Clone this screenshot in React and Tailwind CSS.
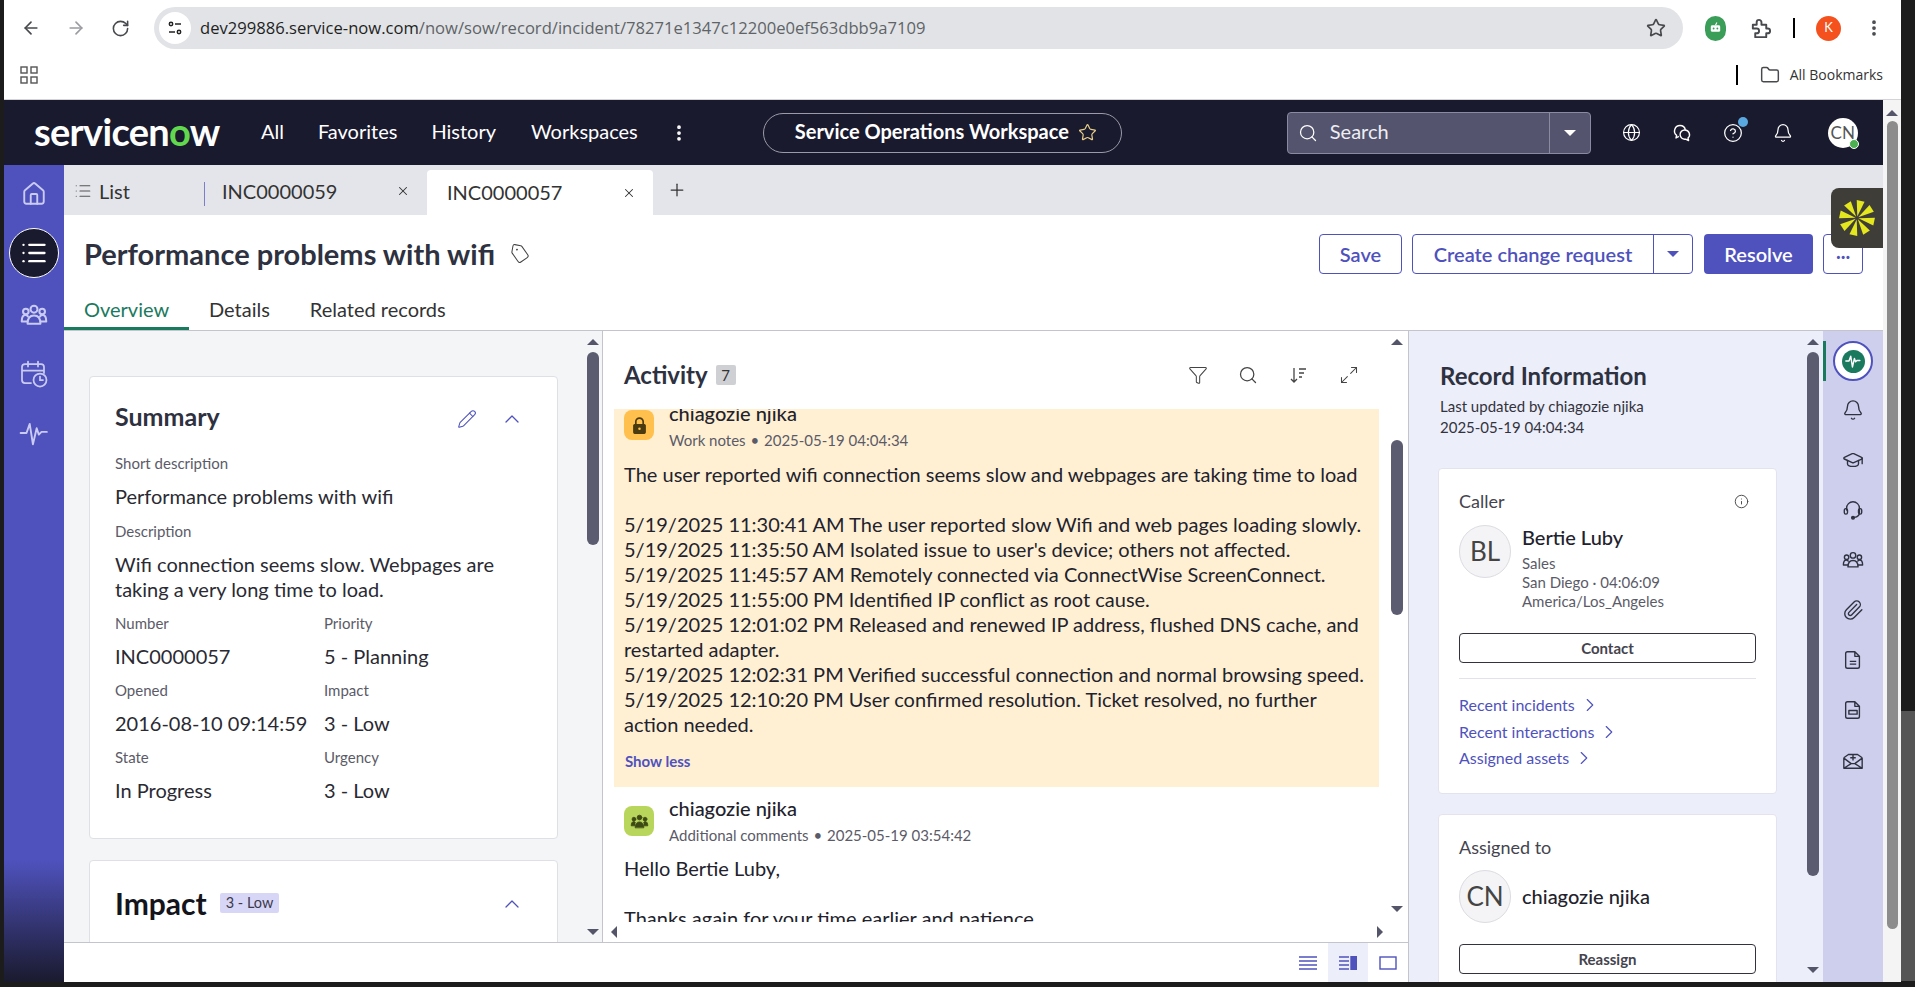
import {
  ArrowLeft, ArrowRight, RotateCw, Star, EllipsisVertical, Folder, Search, Globe, CircleHelp, Bell,
  House, Tag, X, Plus, Pencil, ChevronUp, ChevronRight, Funnel,
  Maximize2, Info, GraduationCap, Paperclip, List,
} from "lucide-react";

const latoClass = "font-['Lato','Noto_Sans',sans-serif]";

function Tri({ dir = "down", color = "border-t-[#55556a]" }) {
  if (dir === "up") return <div className="h-0 w-0 border-x-[6px] border-b-[6px] border-x-transparent border-b-[#55556a]" />;
  if (dir === "left") return <div className="h-0 w-0 border-y-[6px] border-r-[6px] border-y-transparent border-r-[#55556a]" />;
  if (dir === "right") return <div className="h-0 w-0 border-y-[6px] border-l-[6px] border-y-transparent border-l-[#55556a]" />;
  return <div className={`h-0 w-0 border-x-[6px] border-t-[6px] border-x-transparent ${color}`} />;
}

function Scroller({ thumbTop, thumbH, arrowBottom = 8 }) {
  return (
    <div className="flex h-full w-[12px] shrink-0 flex-col items-center pt-[8px]">
      <Tri dir="up" />
      <div className="min-h-0 flex-1 w-full">
        <div className="w-full rounded-full bg-[#5c5c70]" style={{ marginTop: thumbTop, height: thumbH }} />
      </div>
      <div style={{ marginBottom: arrowBottom }}><Tri /></div>
    </div>
  );
}

function PeopleIcon({ className, strokeWidth = 1.5, filled = false }) {
  return (
    <svg viewBox="0 0 24 24" className={className} fill={filled ? "currentColor" : "none"} stroke="currentColor" strokeWidth={strokeWidth} strokeLinecap="round" strokeLinejoin="round">
      <circle cx="12" cy="7" r="3" />
      <circle cx="5" cy="9" r="2.4" />
      <circle cx="19" cy="9" r="2.4" />
      <path d="M6.5 19.5c0-4.5 2.2-7 5.5-7s5.5 2.5 5.5 7z" />
      <path d="M6.8 13.2c-.6-.9-1.2-1.2-2-1.2C2.8 12 1.5 14 1.5 17.5h5M17.2 13.2c.6-.9 1.2-1.2 2-1.2 2 0 3.3 2 3.3 5.5h-5" />
    </svg>
  );
}

function PulseIcon({ className, strokeWidth = 2 }) {
  return (
    <svg viewBox="0 0 28 28" className={className} fill="none" stroke="currentColor" strokeWidth={strokeWidth} strokeLinecap="round" strokeLinejoin="round">
      <path d="M1.5 14H7l3-8.5 3 19 3.5-15 2 6 2.5-2.5h5" />
    </svg>
  );
}

function BrowserBar() {
  return (
    <div className="h-[100px] shrink-0 border-b border-[#d4d4d8] bg-white">
      <div className="flex h-[50px] items-center pt-[6px]">
        <ArrowLeft className="ml-[17px] h-[20px] w-[20px] text-[#47494d]" strokeWidth={2} />
        <ArrowRight className="ml-[25px] h-[20px] w-[20px] text-[#9a9ca0]" strokeWidth={2} />
        <RotateCw className="ml-[25px] h-[19px] w-[19px] text-[#47494d]" strokeWidth={2} />
        <div className="ml-[24px] flex h-[42px] w-[1529px] items-center rounded-full bg-[#e1e3e6] pl-[5px] pr-[17px]">
          <div className="flex h-[32px] w-[32px] items-center justify-center rounded-full bg-white">
            <svg viewBox="0 0 16 16" className="h-[16px] w-[16px]" fill="none" stroke="#222" strokeWidth="1.5">
              <circle cx="4" cy="4" r="1.7" /><path d="M8 4h6M2 12h6" /><circle cx="12" cy="12" r="1.7" />
            </svg>
          </div>
          <div className="ml-[9px] flex-1 font-['Open_Sans',sans-serif] text-[16.6px] text-[#5f6368]">
            <span className="text-[#1f1f1f]">dev299886.service-now.com</span>/now/sow/record/incident/78271e1347c12200e0ef563dbb9a7109
          </div>
          <Star className="h-[20px] w-[20px] text-[#47494d]" strokeWidth={2} />
        </div>
        <div className="ml-[22px] flex h-[25px] w-[21px] items-center justify-center rounded-full bg-[#3a9d58]">
          <svg viewBox="0 0 16 16" className="h-[15px] w-[15px]" fill="white">
            <path d="M9.5 1.5 8 4.5" stroke="white" strokeWidth="1.2" />
            <rect x="3" y="4.5" width="10" height="7" rx="1.5" />
            <circle cx="6" cy="8" r="1" fill="#3a9d58" /><circle cx="10" cy="8" r="1" fill="#3a9d58" />
          </svg>
        </div>
        <svg viewBox="0 0 24 24" className="ml-[23px] h-[23px] w-[23px]" fill="none" stroke="#47494d" strokeWidth="2" strokeLinejoin="round">
          <path d="M4 8h4V5.5a2.5 2.5 0 0 1 5 0V8h5v4h1.5a2.5 2.5 0 0 1 0 5H18v4H6.5v-4H8a2.5 2.5 0 0 0 0-5H4z" />
        </svg>
        <div className="ml-[21px] h-[20px] w-[2px] bg-black" />
        <div className="ml-[21px] flex h-[25px] w-[25px] items-center justify-center rounded-full bg-[#f4511e] text-[13px] text-white">K</div>
        <EllipsisVertical className="ml-[23px] h-[20px] w-[20px] text-[#47494d]" strokeWidth={2.5} />
      </div>
      <div className="flex h-[49px] items-center justify-between">
        <svg viewBox="0 0 18 18" className="ml-[16px] h-[18px] w-[18px]" fill="none" stroke="#555" strokeWidth="1.4">
          <rect x="1" y="1" width="6" height="6" /><rect x="11" y="1" width="6" height="6" />
          <rect x="1" y="11" width="6" height="6" /><rect x="11" y="11" width="6" height="6" />
        </svg>
        <div className="flex items-center">
          <div className="h-[20px] w-[2px] bg-black" />
          <Folder className="ml-[22px] h-[20px] w-[20px] text-[#47494d]" strokeWidth={1.75} />
          <span className="ml-[10px] mr-[18px] font-['Open_Sans',sans-serif] text-[14px] text-[#333]">All Bookmarks</span>
        </div>
      </div>
    </div>
  );
}

function TopNav() {
  return (
    <div className="flex h-[65px] shrink-0 items-center bg-[#1a1a2e] text-white">
      <div className="mb-[3px] ml-[30px] w-[197px] text-[38px] font-bold leading-none tracking-[-0.7px]">
        servicen<span className="text-[#62d84e]">o</span>w
      </div>
      <span className="mb-[3px] ml-[30px] text-[20px]">All</span>
      <span className="mb-[3px] ml-[34px] text-[20px]">Favorites</span>
      <span className="mb-[3px] ml-[34px] text-[20px]">History</span>
      <span className="mb-[3px] ml-[35px] text-[20px]">Workspaces</span>
      <EllipsisVertical className="ml-[31px] h-[20px] w-[20px]" strokeWidth={2.5} />
      <div className="ml-[74px] flex h-[40px] w-[359px] items-center rounded-full border border-[#9a9aa8] pl-[31px]">
        <span className="mb-[3px] text-[20px] font-bold">Service Operations Workspace</span>
        <Star className="ml-[9px] h-[19px] w-[19px] text-[#e8cf8a]" strokeWidth={1.5} />
      </div>
      <div className="ml-[165px] flex h-[42px] w-[304px] items-center rounded border border-[#8a8aa0] bg-[#54546f]">
        <Search className="ml-[10px] h-[20px] w-[20px]" strokeWidth={1.5} />
        <span className="mb-[3px] ml-[12px] flex-1 text-[20px] text-[#eeeef2]">Search</span>
        <div className="flex h-full w-[41px] items-center justify-center border-l border-[#8a8aa0]">
          <Tri color="border-t-white" />
        </div>
      </div>
      <Globe className="ml-[31px] h-[19px] w-[19px]" strokeWidth={1.5} />
      <svg viewBox="0 0 20 20" className="ml-[31px] h-[20px] w-[20px]" fill="none" stroke="white" strokeWidth="1.4" strokeLinejoin="round">
        <path d="M8 2.5a5.5 5.5 0 0 1 5.4 4.4M8 2.5a5.5 5.5 0 0 0-3.4 9.8L4 15l2.8-1.7" />
        <path d="M13 7a4.6 4.6 0 0 1 3 8l.6 2.5-3-1.4A4.6 4.6 0 1 1 13 7z" />
      </svg>
      <div className="relative ml-[31px]">
        <CircleHelp className="h-[20px] w-[20px]" strokeWidth={1.5} />
        <div className="absolute -right-[5px] -top-[6px] h-[10px] w-[10px] rounded-full bg-[#5aa8e0]" />
      </div>
      <Bell className="ml-[30px] h-[20px] w-[20px]" strokeWidth={1.5} />
      <div className="relative ml-[35px] flex h-[30px] w-[30px] items-center justify-center rounded-full bg-white text-[17px] text-[#555]">
        CN
        <div className="absolute -bottom-[1px] -right-[1px] h-[10px] w-[10px] rounded-full border border-white bg-[#4caf50]" />
      </div>
    </div>
  );
}

function SideNav() {
  return (
    <div className="flex w-[60px] shrink-0 flex-col items-center bg-[linear-gradient(to_bottom,#4f52bd_0,#4f52bd_695px,#1a1a2e_817px)] pt-[16px] text-[#c9cbf2]">
      <House className="h-[26px] w-[26px]" strokeWidth={1.75} />
      <div className="mt-[21px] flex h-[50px] w-[50px] items-center justify-center rounded-full border border-white bg-[#1a1a2e] text-white">
        <List className="h-[28px] w-[28px]" strokeWidth={2} />
      </div>
      <PeopleIcon className="mt-[23px] h-[28px] w-[28px]" strokeWidth={1.75} />
      <svg viewBox="0 0 28 28" className="mt-[31px] h-[28px] w-[28px]" fill="none" stroke="currentColor" strokeWidth="1.75" strokeLinecap="round">
        <path d="M11 23H5a3 3 0 0 1-3-3V7a3 3 0 0 1 3-3h16a3 3 0 0 1 3 3v6M8 1.5v5M18 1.5v5M2 10.5h22" />
        <circle cx="20" cy="20" r="6.5" /><path d="M20 16.5V20h3" />
      </svg>
      <PulseIcon className="mt-[30px] h-[30px] w-[30px]" strokeWidth={1.75} />
    </div>
  );
}

function TabBar() {
  return (
    <div className="flex h-[50px] shrink-0 items-end bg-[#e4e5ea] text-[20px] text-[#333]">
      <div className="flex h-[50px] w-[140px] items-center pl-[10px] pt-[2px]">
        <List className="h-[18px] w-[18px] text-[#555]" strokeWidth={1.5} />
        <span className="ml-[7px]">List</span>
      </div>
      <div className="mb-[9px] h-[24px] w-px bg-[#7c7ec8]" />
      <div className="flex h-[50px] w-[222px] items-center pl-[17px] pt-[2px]">
        <span className="flex-1">INC0000059</span>
        <X className="mr-[17px] h-[14px] w-[14px]" strokeWidth={1.75} />
      </div>
      <div className="flex h-[45px] w-[226px] items-center rounded-t bg-white pb-[2px] pl-[20px]">
        <span className="flex-1">INC0000057</span>
        <X className="mr-[17px] mt-[2px] h-[14px] w-[14px]" strokeWidth={1.75} />
      </div>
      <Plus className="mb-[15px] ml-[14px] h-[20px] w-[20px]" strokeWidth={1.5} />
    </div>
  );
}

function RecordHeader() {
  return (
    <div className="h-[116px] shrink-0 border-b border-[#c4c4cc] bg-white">
      <div className="flex h-[78px] items-center pl-[20px] pr-[20px]">
        <span className="text-[29px] font-bold text-[#2e3140]">Performance problems with wifi</span>
        <Tag className="ml-[15px] h-[20px] w-[20px] rotate-[10deg] text-[#444]" strokeWidth={1.25} />
        <div className="ml-auto flex items-center text-[20px] font-semibold text-[#4f52bd]">
          <div className="flex h-[40px] w-[83px] items-center justify-center rounded border border-[#4f52bd]">Save</div>
          <div className="ml-[10px] flex h-[40px] w-[281px] items-center rounded border border-[#4f52bd]">
            <span className="flex h-full w-[241px] items-center justify-center border-r border-[#4f52bd]">Create change request</span>
            <span className="flex flex-1 justify-center"><Tri color="border-t-[#4f52bd]" /></span>
          </div>
          <div className="ml-[11px] flex h-[40px] w-[109px] items-center justify-center rounded bg-[#4f52bd] text-white">Resolve</div>
          <div className="ml-[10px] flex h-[40px] w-[40px] items-center justify-center rounded border border-[#4f52bd] pb-[6px] font-bold leading-none">...</div>
        </div>
      </div>
      <div className="flex h-[37px] items-end text-[20px] text-[#333]">
        <div className="flex h-[37px] w-[125px] items-center border-b-[3px] border-[#1a7a5e] pb-[2px] pl-[20px] text-[#1a7a5e]">Overview</div>
        <div className="flex h-[37px] items-center pb-[5px] pl-[20px]">Details</div>
        <div className="flex h-[37px] items-center pb-[5px] pl-[40px]">Related records</div>
      </div>
    </div>
  );
}

function Field({ label, value }) {
  return (
    <div>
      <div className="text-[15px] leading-[20px] text-[#5b5b68]">{label}</div>
      <div className="mt-[11px] text-[20px] leading-[25px] text-[#2a2a33]">{value}</div>
    </div>
  );
}

function SummaryPanel() {
  return (
    <div className="flex w-[539px] shrink-0 border-r border-[#c4c4cc] bg-[#f4f5f7]">
      <div className="min-w-0 flex-1 overflow-hidden pl-[25px] pr-[29px] pt-[45px]">
        <div className="h-[463px] rounded border border-[#dfe0e6] bg-white pl-[25px] pr-[30px] pt-[21px]">
          <div className="flex items-center">
            <span className="text-[25px] font-bold leading-[36px] text-[#2e3140]">Summary</span>
            <Pencil className="ml-auto mt-[6px] h-[20px] w-[20px] text-[#4f52bd]" strokeWidth={1.25} />
            <ChevronUp className="ml-[23px] mr-[3px] mt-[6px] h-[24px] w-[24px] text-[#4f52bd]" strokeWidth={1.25} />
          </div>
          <div className="mt-[19px] text-[15px] leading-[20px] text-[#5b5b68]">Short description</div>
          <div className="mt-[11px] text-[20px] leading-[25px] text-[#2a2a33]">Performance problems with wifi</div>
          <div className="mt-[12px] text-[15px] leading-[20px] text-[#5b5b68]">Description</div>
          <div className="mt-[11px] text-[20px] leading-[25px] text-[#2a2a33]">Wifi connection seems slow. Webpages are taking a very long time to load.</div>
          <div className="mt-[11px] grid grid-cols-[209px_1fr] gap-y-[11px]">
            <Field label="Number" value="INC0000057" />
            <Field label="Priority" value="5 - Planning" />
            <Field label="Opened" value="2016-08-10 09:14:59" />
            <Field label="Impact" value="3 - Low" />
            <Field label="State" value="In Progress" />
            <Field label="Urgency" value="3 - Low" />
          </div>
        </div>
        <div className="mt-[21px] flex h-[120px] items-start rounded border border-[#dfe0e6] bg-white pl-[25px] pr-[30px] pt-[22px]">
          <span className="text-[30px] font-bold leading-[40px] text-[#14141c]">Impact</span>
          <span className="ml-[13px] mt-[10px] rounded-[2px] bg-[#d8d6f7] px-[6px] text-[14.5px] leading-[20px] text-[#3a3a4a]">3 - Low</span>
          <ChevronUp className="ml-auto mr-[3px] mt-[9px] h-[24px] w-[24px] text-[#4f52bd]" strokeWidth={1.25} />
        </div>
      </div>
      <div className="mr-[3px] flex w-[12px]"><Scroller thumbTop={7} thumbH={193} arrowBottom={7} /></div>
    </div>
  );
}

function EntryMeta({ icon, bg, type, time, iconTop }) {
  return (
    <div className="flex pl-[10px]">
      <div className={`flex h-[30px] w-[30px] items-center justify-center rounded-lg ${bg} ${iconTop}`}>{icon}</div>
      <div className="ml-[15px]">
        <div className="text-[20px] font-medium leading-[24px] text-[#22222c]">chiagozie njika</div>
        <div className="mt-[3px] text-[15px] leading-[24px] text-[#5b5b68]">{type} <span className="mx-[1px]">•</span> {time}</div>
      </div>
    </div>
  );
}

function LockIcon() {
  return (
    <svg viewBox="0 0 18 18" className="h-[19px] w-[19px]" fill="#4a3a10" stroke="#4a3a10">
      <path d="M5.5 8V5.5a3.5 3.5 0 0 1 7 0V8" fill="none" strokeWidth="1.6" />
      <rect x="3.5" y="8" width="11" height="8.5" rx="1" />
      <circle cx="9" cy="12" r="1.2" fill="#ffc04d" stroke="none" />
    </svg>
  );
}

function ActivityPanel() {
  const lines = [
    "5/19/2025 11:30:41 AM The user reported slow Wifi and web pages loading slowly.",
    "5/19/2025 11:35:50 AM Isolated issue to user's device; others not affected.",
    "5/19/2025 11:45:57 AM Remotely connected via ConnectWise ScreenConnect.",
    "5/19/2025 11:55:00 PM Identified IP conflict as root cause.",
    "5/19/2025 12:01:02 PM Released and renewed IP address, flushed DNS cache, and restarted adapter.",
    "5/19/2025 12:02:31 PM Verified successful connection and normal browsing speed.",
    "5/19/2025 12:10:20 PM User confirmed resolution. Ticket resolved, no further action needed.",
  ];
  return (
    <div className="flex min-w-0 flex-1 bg-white">
      <div className="flex min-w-0 flex-1 flex-col">
        <div className="flex h-[78px] shrink-0 items-center pl-[21px] pt-[10px]">
          <span className="text-[24px] font-bold leading-none text-[#2e3140]">Activity</span>
          <span className="ml-[8px] flex h-[20px] w-[20px] items-center justify-center rounded-[2px] bg-[#cfd0d4] text-[15px] text-[#333]">7</span>
          <Funnel className="ml-auto h-[20px] w-[20px] text-[#444]" strokeWidth={1.25} />
          <Search className="ml-[30px] h-[20px] w-[20px] text-[#444]" strokeWidth={1.5} />
          <svg viewBox="0 0 20 20" className="ml-[30px] h-[20px] w-[20px]" fill="none" stroke="#444" strokeWidth="1.3">
            <path d="M6 3v14M3 14l3 3 3-3M11 4h7M11 8h5M11 12h3" />
          </svg>
          <Maximize2 className="ml-[31px] mr-[32px] h-[20px] w-[20px] text-[#444]" strokeWidth={1.25} />
        </div>
        <div className="min-h-0 flex-1 overflow-hidden pl-[11px] pr-[12px]">
          <div className="h-[378px] bg-[#fff0d4] pt-[1px]">
            <div className="-mt-[9px]">
              <EntryMeta
                bg="bg-[#ffc04d]"
                iconTop="mt-[9px]"
                icon={<LockIcon />}
                type="Work notes"
                time="2025-05-19 04:04:34"
              />
            </div>
            <div className="mt-[10px] pl-[10px] pr-[8px] text-[20px] leading-[25px] text-[#22222c]">
              <div>The user reported wifi connection seems slow and webpages are taking time to load</div>
              <div className="mt-[25px]">{lines.map((l) => <div key={l}>{l}</div>)}</div>
            </div>
            <div className="mt-[14px] pl-[11px] text-[15px] font-bold leading-[20px] text-[#4f52bd]">Show less</div>
          </div>
          <div className="mt-[9px]">
            <EntryMeta
              bg="bg-[#b9d65c]"
              iconTop="mt-[10px]"
              icon={<PeopleIcon className="h-[19px] w-[19px] text-[#3d4a14]" strokeWidth={1} filled />}
              type="Additional comments"
              time="2025-05-19 03:54:42"
            />
          </div>
          <div className="mt-[9px] pl-[10px] text-[20px] leading-[25px] text-[#22222c]">
            <div>Hello Bertie Luby,</div>
            <div className="mt-[25px]">Thanks again for your time earlier and patience</div>
          </div>
        </div>
        <div className="flex h-[20px] shrink-0 items-center justify-between px-[8px]">
          <Tri dir="left" /><Tri dir="right" />
        </div>
      </div>
      <div className="mr-[5px] w-[12px]"><Scroller thumbTop={95} thumbH={175} arrowBottom={30} /></div>
    </div>
  );
}

function BottomBar() {
  return (
    <div className="flex h-[40px] shrink-0 items-center justify-end border-t border-[#c4c4cc] bg-white text-[#4f52bd]">
      <div className="flex h-full w-[40px] items-center justify-center">
        <svg viewBox="0 0 18 14" className="h-[14px] w-[18px]" fill="none" stroke="currentColor" strokeWidth="1.4"><path d="M0 1h18M0 5h18M0 9h18M0 13h18" /></svg>
      </div>
      <div className="flex h-full w-[40px] items-center justify-center bg-[#eceefa]">
        <svg viewBox="0 0 18 14" className="h-[14px] w-[18px]" fill="none" stroke="currentColor" strokeWidth="1.4"><path d="M0 1h10M0 5h10M0 9h10M0 13h10" /><rect x="12" y="0" width="6" height="14" fill="currentColor" /></svg>
      </div>
      <div className="flex h-full w-[40px] items-center justify-center">
        <svg viewBox="0 0 18 14" className="h-[14px] w-[18px]" fill="none" stroke="currentColor" strokeWidth="1.4"><rect x="1" y="1" width="16" height="12" /></svg>
      </div>
    </div>
  );
}

function Avatar({ text }) {
  return (
    <div className="flex h-[53px] w-[52px] shrink-0 items-center justify-center rounded-full border border-[#dcdce2] bg-[#f4f4f6] text-[26px] text-[#444]">{text}</div>
  );
}

function RecordLink({ label }) {
  return (
    <div className="flex h-[20px] items-center">
      {label}<ChevronRight className="ml-[4px] h-[22px] w-[22px]" strokeWidth={1.25} />
    </div>
  );
}

function RecordInfo() {
  return (
    <div className="flex w-[415px] shrink-0 border-l border-[#c4c4cc] bg-[#eceefa]">
      <div className="min-w-0 flex-1 overflow-hidden pl-[31px] pr-[30px]">
        <div className="mt-[29px] text-[24px] font-bold leading-[32px] text-[#2e3140]">Record Information</div>
        <div className="mt-[4px] text-[15px] leading-[21px] text-[#33333d]">Last updated by chiagozie njika<br />2025-05-19 04:04:34</div>
        <div className="ml-[-2px] mt-[30px] h-[326px] rounded border border-[#e2e3ee] bg-white px-[20px] pt-[19px]">
          <div className="flex items-center justify-between pr-[7px]">
            <span className="text-[18px] leading-[26px] text-[#44444e]">Caller</span>
            <Info className="h-[15px] w-[15px] text-[#444]" strokeWidth={1.5} />
          </div>
          <div className="mt-[11px] flex">
            <Avatar text="BL" />
            <div className="ml-[11px]">
              <div className="text-[20px] font-medium leading-[24px] text-[#22222c]">Bertie Luby</div>
              <div className="mt-[5px] text-[15px] leading-[19px] text-[#5b5b68]">Sales<br />San Diego · 04:06:09<br />America/Los_Angeles</div>
            </div>
          </div>
          <div className="mt-[22px] flex h-[30px] items-center justify-center rounded border border-[#33333d] text-[15px] font-bold text-[#44444e]">Contact</div>
          <div className="mt-[15px] border-t border-[#e2e2e8]" />
          <div className="mt-[16px] space-y-[6.5px] text-[16px] leading-[20px] text-[#4f52bd]">
            <RecordLink label="Recent incidents" />
            <RecordLink label="Recent interactions" />
            <RecordLink label="Assigned assets" />
          </div>
        </div>
        <div className="ml-[-2px] mt-[20px] h-[200px] rounded border border-[#e2e3ee] bg-white px-[20px] pt-[19px]">
          <div className="text-[18px] leading-[26px] text-[#44444e]">Assigned to</div>
          <div className="mt-[10px] flex items-center">
            <Avatar text="CN" />
            <div className="ml-[11px] pb-[2px] text-[20px] font-medium text-[#22222c]">chiagozie njika</div>
          </div>
          <div className="mt-[21px] flex h-[30px] items-center justify-center rounded border border-[#33333d] text-[15px] font-bold text-[#44444e]">Reassign</div>
        </div>
      </div>
      <div className="mr-[4px] w-[12px]"><Scroller thumbTop={7} thumbH={524} arrowBottom={9} /></div>
    </div>
  );
}

function Rail() {
  const cls = "h-[22px] w-[22px] text-[#2e3140]";
  return (
    <div className="relative flex w-[60px] shrink-0 flex-col items-center gap-[28px] bg-[#cdcfec] pt-[10px]">
      <div className="absolute left-0 top-[10px] h-[40px] w-[3px] bg-[#1a7a5e]" />
      <div className="-mb-[10px] flex h-[40px] w-[40px] items-center justify-center rounded-full border-2 border-[#4f52bd] bg-white">
        <div className="flex h-[23px] w-[23px] items-center justify-center rounded-full bg-[#1a7a5e]">
          <PulseIcon className="h-[16px] w-[16px] text-white" strokeWidth={2.5} />
        </div>
      </div>
      <Bell className={cls} strokeWidth={1.5} />
      <GraduationCap className={cls} strokeWidth={1.5} />
      <svg viewBox="0 0 24 24" className={cls} fill="none" stroke="currentColor" strokeWidth="1.5" strokeLinecap="round">
        <path d="M5 12V10a7 7 0 0 1 14 0v5c0 2.5-2 4.5-5.5 5" />
        <rect x="2.5" y="10.5" width="3.5" height="6" rx="1.7" />
        <rect x="18" y="10.5" width="3.5" height="6" rx="1.7" />
        <circle cx="12" cy="20.5" r="1.5" fill="currentColor" />
      </svg>
      <PeopleIcon className={cls} strokeWidth={1.5} />
      <Paperclip className={cls} strokeWidth={1.5} />
      <svg viewBox="0 0 24 24" className={cls} fill="none" stroke="currentColor" strokeWidth="1.5" strokeLinejoin="round">
        <path d="M6 3h8l5 5v11a2 2 0 0 1-2 2H6a2 2 0 0 1-2-2V5a2 2 0 0 1 2-2zM14 3v5h5M8.5 13.5h7M8.5 16.5h7" />
      </svg>
      <svg viewBox="0 0 24 24" className={cls} fill="none" stroke="currentColor" strokeWidth="1.5" strokeLinejoin="round">
        <path d="M6 3h8l5 5v11a2 2 0 0 1-2 2H6a2 2 0 0 1-2-2V5a2 2 0 0 1 2-2zM14 3v5h5" />
        <rect x="7.5" y="12.5" width="9" height="4" />
      </svg>
      <svg viewBox="0 0 24 24" className={cls} fill="none" stroke="currentColor" strokeWidth="1.5" strokeLinejoin="round">
        <path d="M2 9.5V21h20V9.5M2 9.5 7 6h10l5 3.5M2 10l8 6M22 10l-8 6M2 21l8-5h4l8 5M12 6.5v6M9 9.5h6" />
      </svg>
    </div>
  );
}

function SpokeMark() {
  const spokes = [0, 45, 90, 135, 180, 225, 270, 315];
  return (
    <svg viewBox="0 0 36 36" className="h-[36px] w-[36px]" fill="#e4e61e">
      {spokes.map((a) => (
        <path key={a} d="M18 16.5 14 .5h8z" transform={`rotate(${a + 12} 18 18)`} />
      ))}
    </svg>
  );
}

export default function App() {
  return (
    <div className={`relative flex h-[987px] w-[1915px] overflow-hidden bg-[#1c1c1c] ${latoClass}`}>
      <div className="ml-[4px] flex h-[982px] w-[1897px] shrink-0 flex-col bg-white">
        <BrowserBar />
        <div className="flex min-h-0 flex-1">
          <div className="relative flex w-[1879px] shrink-0 flex-col">
            <TopNav />
            <div className="flex min-h-0 flex-1">
              <SideNav />
              <div className="flex min-w-0 flex-1 flex-col">
                <TabBar />
                <RecordHeader />
                <div className="flex min-h-0 flex-1">
                  <div className="flex min-w-0 flex-1 flex-col">
                    <div className="flex min-h-0 flex-1">
                      <SummaryPanel />
                      <ActivityPanel />
                    </div>
                    <BottomBar />
                  </div>
                  <RecordInfo />
                  <Rail />
                </div>
              </div>
            </div>
            {/* floating widget over the page */}
            <div className="absolute right-0 top-[88px] flex h-[60px] w-[52px] items-center justify-center rounded-l-lg bg-[#3f3d38]">
              <SpokeMark />
            </div>
          </div>
          <div className="flex w-[18px] shrink-0 flex-col items-center bg-[#f4f4f4] pt-[10px]">
            <Tri dir="up" />
            <div className="mt-[5px] h-[808px] w-[11px] rounded-full bg-[#8c8c8c]" />
          </div>
        </div>
      </div>
      <div className="mt-[711px] h-[270px] w-[14px] bg-[#555]" />
    </div>
  );
}
